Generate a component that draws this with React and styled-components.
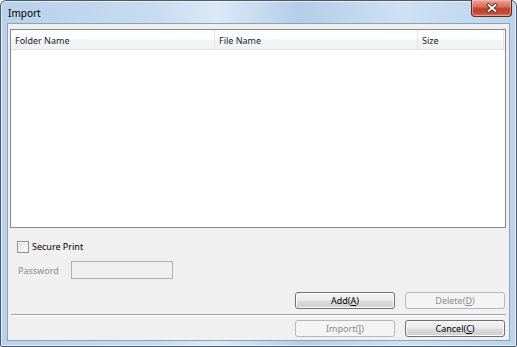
import React from 'react'
import styled, { createGlobalStyle } from 'styled-components'

const Global = createGlobalStyle`
  html, body {
    margin: 0;
    padding: 0;
    background: #ffffff;
  }
  body {
    font-family: "Noto Sans", "Open Sans", sans-serif;
    font-size: 9px;
  }
`

const Window = styled.div`
  box-sizing: border-box;
  width: 517px;
  height: 347px;
  border: 1px solid #4a5a6a;
  border-radius: 6px 6px 2px 2px;
  background: linear-gradient(90deg, #b9d1ea 0%, #c8dbef 30%, #dce9f6 42%, #b4cde8 58%, #cfe0f2 78%, #bcd3ec 100%);
  display: flex;
  flex-direction: column;
  padding: 0 6px 5px 6px;
  box-shadow: inset 0 0 0 1px rgba(255, 255, 255, 0.6);
`

const TitleBar = styled.div`
  height: 22px;
  display: flex;
  justify-content: space-between;
  align-items: flex-start;
`

const Title = styled.div`
  padding: 5px 0 0 1px;
  font-size: 10px;
  color: #000;
`

const CloseButton = styled.div`
  width: 41px;
  height: 17px;
  margin-top: -1px;
  margin-right: -2px;
  box-sizing: border-box;
  border: 1px solid #5b2a22;
  border-top: none;
  border-radius: 0 0 4px 4px;
  background: linear-gradient(180deg, #e4a596 0%, #d6735f 40%, #c5412b 55%, #c24a33 80%, #d8735c 100%);
  box-shadow: inset 0 0 0 1px rgba(255, 210, 200, 0.5);
  display: flex;
  align-items: center;
  justify-content: center;
`

const Client = styled.div`
  flex: 1;
  border: 1px solid #8aa3bd;
  background: #f0f0f0;
  display: flex;
  flex-direction: column;
  padding: 5px 3px 0 2px;
`

const ListBox = styled.div`
  height: 197px;
  border: 1px solid #828790;
  background: #fff;
  display: flex;
  flex-direction: column;
`

const Header = styled.div`
  display: flex;
  height: 19px;
  border-bottom: 1px solid #e2e3e5;
  background: linear-gradient(180deg, #ffffff 0%, #ffffff 45%, #f3f4f6 55%, #f1f2f4 100%);
`

const HeaderCell = styled.div`
  width: ${p => p.w}px;
  box-sizing: border-box;
  padding: 4px 0 0 4px;
  color: #1b2533;
  border-right: 1px solid #e2e3e5;
  white-space: nowrap;
`

const HeaderFill = styled.div`
  flex: 1;
`

const CheckRow = styled.label`
  display: flex;
  align-items: center;
  gap: 3px;
  margin: 12px 0 0 7px;
  color: #000;
`

const CheckBox = styled.span`
  width: 12px;
  height: 12px;
  box-sizing: border-box;
  border: 1px solid #8e8f8f;
  background: linear-gradient(135deg, #dcdcdc 0%, #f2f2f2 60%, #ffffff 100%);
  box-shadow: inset 0 0 0 1px #f4f4f4;
`

const FieldRow = styled.div`
  display: flex;
  align-items: center;
  margin: 8px 0 0 8px;
`

const FieldLabel = styled.span`
  width: 53px;
  color: #8d8d8d;
`

const FieldInput = styled.div`
  width: 102px;
  height: 18px;
  box-sizing: border-box;
  border: 1px solid #b0b0b0;
  background: #f0f0f0;
`

const ButtonRow = styled.div`
  display: flex;
  justify-content: flex-end;
  gap: 10px;
  margin-top: ${p => p.top}px;
  padding-right: 1px;
`

const Button = styled.div`
  width: 100px;
  height: 17px;
  box-sizing: border-box;
  border: 1px solid ${p => (p.disabled ? '#b5b9bc' : '#707070')};
  border-radius: 3px;
  background: ${p => (p.disabled
    ? '#f4f4f4'
    : 'linear-gradient(180deg, #f2f2f2 0%, #ebebeb 48%, #dddddd 52%, #cfcfcf 100%)')};
  box-shadow: inset 0 0 0 1px ${p => (p.disabled ? '#f4f4f4' : '#fcfcfc')};
  color: ${p => (p.disabled ? '#8a8a8a' : '#000')};
  display: flex;
  align-items: center;
  justify-content: center;
  line-height: 1;
`

const Separator = styled.div`
  height: 1px;
  background: #a0a0a0;
  border-bottom: 1px solid #ffffff;
  margin: 5px 0 0 1px;
`

const CloseGlyph = () => (
  <svg width="12" height="10" viewBox="0 0 12 10">
    <path d="M2.5 2 L9.5 8 M9.5 2 L2.5 8" stroke="#5a2a20" strokeWidth="3.6" strokeLinecap="square" />
    <path d="M2.5 2 L9.5 8 M9.5 2 L2.5 8" stroke="#ffffff" strokeWidth="1.8" strokeLinecap="square" />
  </svg>
)

export default function App() {
  return (
    <>
      <Global />
      <Window>
        <TitleBar>
          <Title>Import</Title>
          <CloseButton>
            <CloseGlyph />
          </CloseButton>
        </TitleBar>
        <Client>
          <ListBox>
            <Header>
              <HeaderCell w={204}>Folder Name</HeaderCell>
              <HeaderCell w={203}>File Name</HeaderCell>
              <HeaderCell w={86}>Size</HeaderCell>
              <HeaderFill />
            </Header>
          </ListBox>
          <CheckRow>
            <CheckBox />
            Secure Print
          </CheckRow>
          <FieldRow>
            <FieldLabel>Password</FieldLabel>
            <FieldInput />
          </FieldRow>
          <ButtonRow top={13}>
            <Button>Add(<u>A</u>)</Button>
            <Button disabled>Delete(<u>D</u>)</Button>
          </ButtonRow>
          <Separator />
          <ButtonRow top={4}>
            <Button disabled>Import(<u>I</u>)</Button>
            <Button>Cancel(<u>C</u>)</Button>
          </ButtonRow>
        </Client>
      </Window>
    </>
  )
}
